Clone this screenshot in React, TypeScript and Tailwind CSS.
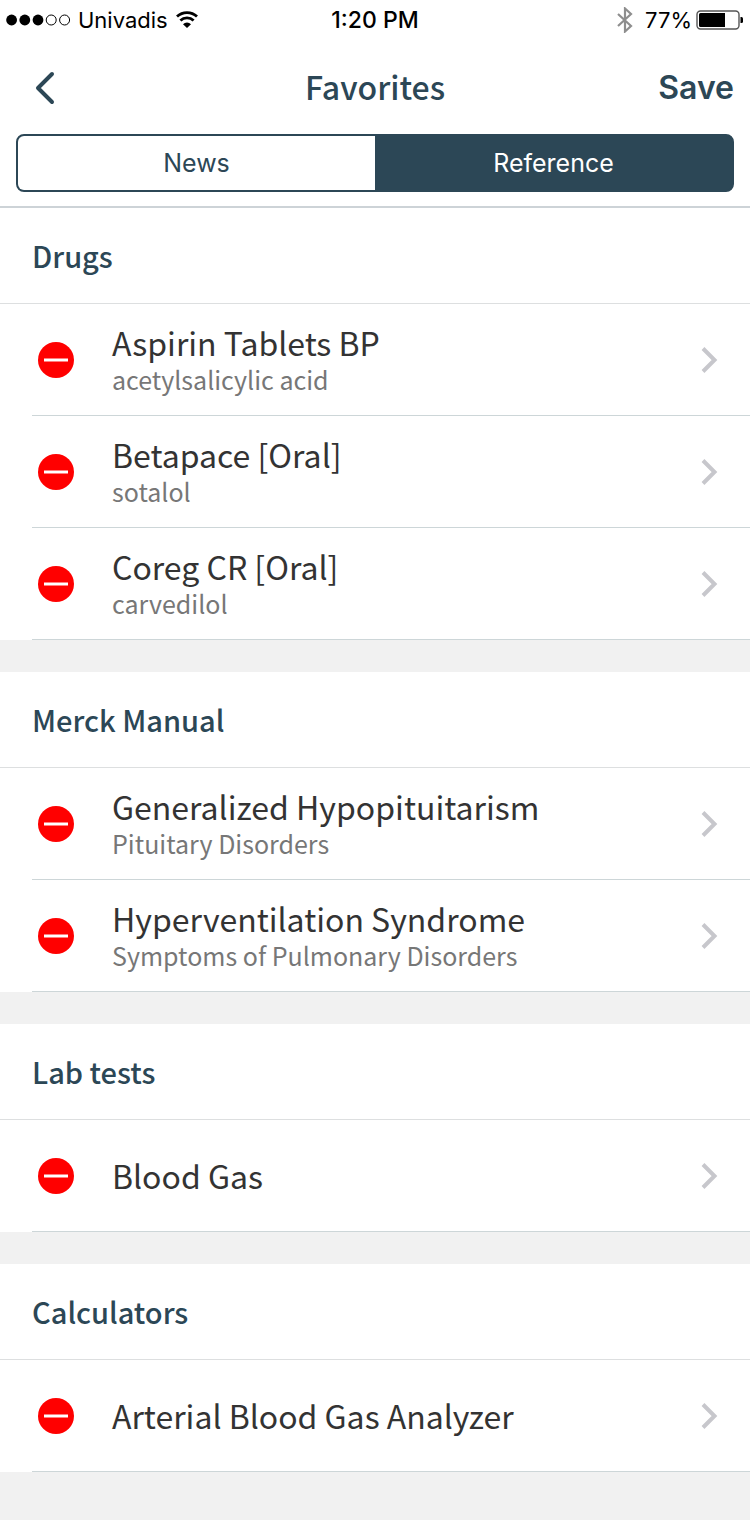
import React, { useState } from 'react';

interface Favorite {
  title: string;
  subtitle?: string;
}

interface FavoriteGroup {
  name: string;
  items: Favorite[];
}

const initialGroups: FavoriteGroup[] = [
  {
    name: 'Drugs',
    items: [
      { title: 'Aspirin Tablets BP', subtitle: 'acetylsalicylic acid' },
      { title: 'Betapace [Oral]', subtitle: 'sotalol' },
      { title: 'Coreg CR [Oral]', subtitle: 'carvedilol' },
    ],
  },
  {
    name: 'Merck Manual',
    items: [
      { title: 'Generalized Hypopituitarism', subtitle: 'Pituitary Disorders' },
      { title: 'Hyperventilation Syndrome', subtitle: 'Symptoms of Pulmonary Disorders' },
    ],
  },
  { name: 'Lab tests', items: [{ title: 'Blood Gas' }] },
  { name: 'Calculators', items: [{ title: 'Arterial Blood Gas Analyzer' }] },
];

const tabs = ['News', 'Reference'];

const StatusBar: React.FC = () => (
  <div className="grid h-10 grid-cols-[1fr_auto_1fr] items-center px-1.5 font-['Inter',sans-serif] text-[22px] leading-7 text-black">
    <div className="flex items-center">
      {/* Signal strength */}
      <svg className="h-3 w-16" viewBox="0 0 64 12" aria-hidden="true">
        <circle cx="5.6" cy="6" r="5.4" />
        <circle cx="18.8" cy="6" r="5.4" />
        <circle cx="32" cy="6" r="5.4" />
        <circle cx="45.2" cy="6" r="5" fill="none" stroke="black" />
        <circle cx="58.6" cy="6" r="5" fill="none" stroke="black" />
      </svg>
      <span className="ml-2">Univadis</span>
      <svg className="ml-2 h-[18px] w-[22px]" viewBox="0 0 22 18" aria-hidden="true">
        <g fill="none" stroke="black" strokeWidth="2.8">
          <path d="M1 5.600a14.600 14.600 0 0 1 20 0" />
          <path d="M4.400 9.500a9.600 9.600 0 0 1 13.200 0" />
        </g>
        <path d="M7 13.200a5.600 5.600 0 0 1 8 0L11 17z" />
      </svg>
    </div>
    <span className="text-[23px] font-medium">1:20 PM</span>
    <div className="flex items-center justify-end">
      <svg className="h-[26px] w-4" viewBox="0 0 16 26" fill="none" stroke="#8e8e8e" strokeWidth="2.200" aria-hidden="true">
        <path d="M1 7l13 12-6 5.500V1.500L14 7 1 19" />
      </svg>
      <span className="ml-3">77%</span>
      <svg className="ml-1 h-5 w-12" viewBox="0 0 48 20" aria-hidden="true">
        <rect x="1" y="1" width="42" height="18" rx="3.5" fill="white" stroke="#555" strokeWidth="1.4" />
        <path d="M4.500 3H29v14H4.500A1.500 1.500 0 0 1 3 15.500v-11A1.500 1.500 0 0 1 4.500 3z" />
        <path d="M44.500 7h1a1.500 1.500 0 0 1 1.500 1.500v3a1.500 1.500 0 0 1-1.500 1.500h-1z" />
      </svg>
    </div>
  </div>
);

const FavoriteRow: React.FC<{ item: Favorite; onRemove: () => void }> = ({ item, onRemove }) => (
  <li className="ml-8 flex h-28 items-center border-b border-[#cdd6d8]">
    <button type="button" onClick={onRemove} aria-label={`Remove ${item.title}`} className="ml-1.5 shrink-0">
      <svg className="size-9" viewBox="0 0 36 36" aria-hidden="true">
        <circle cx="18" cy="18" r="18" fill="#ff0000" />
        <path d="M6 18h24" stroke="white" strokeWidth="3" />
      </svg>
    </button>
    <a href="#" className="ml-[38px] flex h-full flex-1 items-center justify-between pr-8">
      <div className="pb-0.5">
        <div className="text-[32px] leading-10 text-[#333333]">{item.title}</div>
        {item.subtitle && <div className="text-[25px] leading-[34px] text-[#777777]">{item.subtitle}</div>}
      </div>
      <svg className="h-7 w-[18px]" viewBox="0 0 18 28" fill="none" stroke="#c7c7cc" strokeWidth="4" aria-hidden="true">
        <path d="M3 2.500L14.500 14 3 25.500" />
      </svg>
    </a>
  </li>
);

const App: React.FC = () => {
  const [groups, setGroups] = useState<FavoriteGroup[]>(initialGroups);
  const [activeTab, setActiveTab] = useState('Reference');

  const removeItem = (groupName: string, title: string) => {
    setGroups(
      groups.map(group =>
        group.name === groupName
          ? { ...group, items: group.items.filter(item => item.title !== title) }
          : group
      )
    );
  };

  return (
    <div className="min-h-screen bg-[#f1f1f1] font-['Noto_Sans_CJK_SC',sans-serif]">
      {/* Header */}
      <header className="border-b-2 border-[#cdd3d7] bg-white text-[#2c4756]">
        <StatusBar />
        <div className="grid h-[94px] grid-cols-[1fr_auto_1fr] items-center px-4">
          <button type="button" aria-label="Back" className="justify-self-start pl-4">
            <svg className="h-9 w-6" viewBox="0 0 24 36" fill="none" stroke="currentColor" strokeWidth="4" strokeLinecap="round" strokeLinejoin="round" aria-hidden="true">
              <path d="M20 5L6 19l14 14" />
            </svg>
          </button>
          <h1 className="pb-0.5 text-[32px] font-medium leading-10">Favorites</h1>
          <button type="button" className="justify-self-end pt-0.5 font-['Inter',sans-serif] text-[32px] font-semibold leading-10">
            Save
          </button>
        </div>
        <div className="px-4 pb-3.5">
          <div role="tablist" className="flex h-[58px] rounded-lg border-2 border-[#2c4756] bg-[#2c4756]">
            {tabs.map(tab => (
              <button
                key={tab}
                type="button"
                role="tab"
                aria-selected={activeTab === tab}
                onClick={() => setActiveTab(tab)}
                className={`flex-1 font-['Inter',sans-serif] text-[25px] leading-8 first:rounded-l-md last:rounded-r-md ${
                  activeTab === tab ? 'text-white' : 'bg-white'
                }`}
              >
                {tab}
              </button>
            ))}
          </div>
        </div>
      </header>

      {/* Favorites */}
      <main className="flex flex-col gap-8">
        {groups.map(group => (
          <section key={group.name} className="bg-white">
            <h2 className="flex h-24 items-center border-b border-[#dddfe0] px-8 pb-0.5 text-[29px] font-medium leading-10 text-[#2c4756]">
              {group.name}
            </h2>
            <ul>
              {group.items.map(item => (
                <FavoriteRow
                  key={item.title}
                  item={item}
                  onRemove={() => removeItem(group.name, item.title)}
                />
              ))}
            </ul>
          </section>
        ))}
      </main>
    </div>
  );
};

export default App;
